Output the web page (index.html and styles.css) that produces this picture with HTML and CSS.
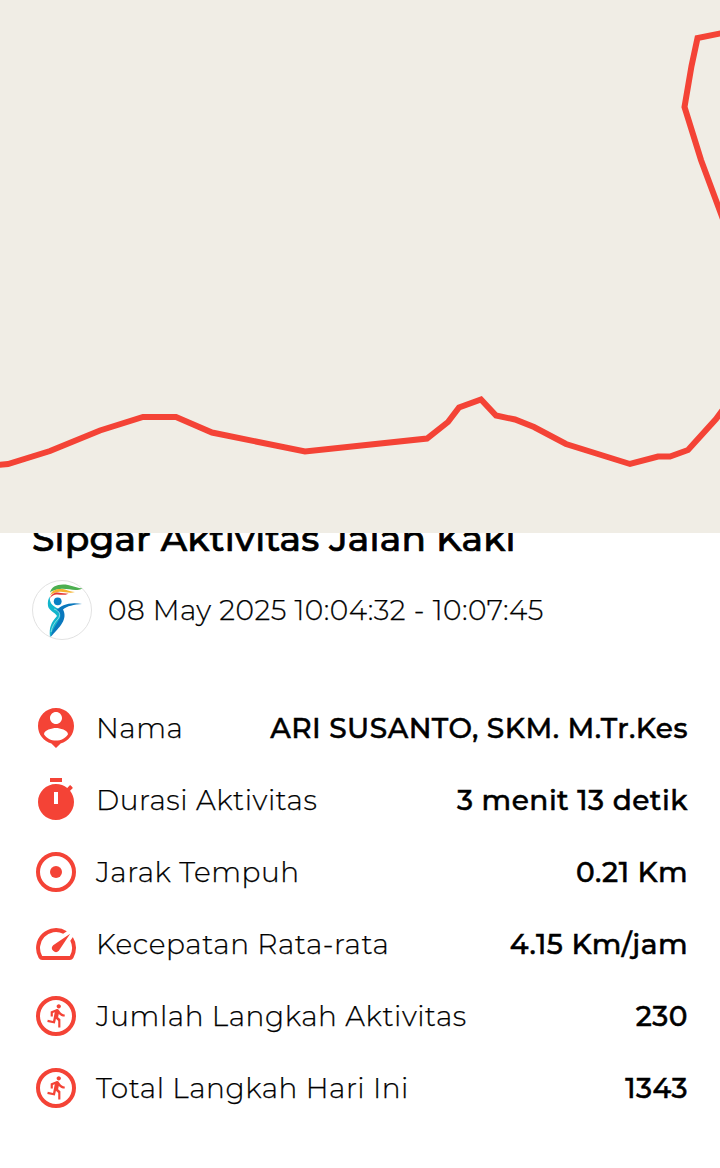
FILE: index.html
```
<!DOCTYPE html>
<html lang="id">
<head>
  <meta charset="UTF-8" />
  <meta name="viewport" content="width=device-width, initial-scale=1.0"/>
  <title>Sipgar Aktivitas Jalan Kaki</title>
  <link rel="stylesheet" href="styles.css">
</head>
<body>

  <!-- Route map -->
  <div class="map">
    <svg class="route" viewBox="0 0 720 533">
      <polyline points="-10,465.5 8,464 50,451 100,430.5 143,417 176,417 212,432.5 305,451.5 427,438.5 448,422 459,407.5 481,399.5 496,415.5 515,419.5 534,427 566,444 630,464 658,456.5 670,456.5 688,450 716,419 730,400"/>
      <polyline points="730,31.5 697.5,38 691.5,66 684.5,107 701,160 730,238"/>
    </svg>
  </div>

  <main class="detail">
    <h1 class="title"><span>Sipgar Aktivitas Jalan Kaki</span></h1>

    <div class="date-row">
      <svg class="avatar" viewBox="0 0 60 60">
        <circle cx="30" cy="30" r="29.5" fill="#fff" stroke="#e2e2e2"/>
        <path d="M18 13C19 6 27 3.500 36 5C41 6 46 8 50.500 8.500C43 12 36 8 28 9C22 10 19 11 18 13Z" fill="#4caf50"/>
        <path d="M18 16C20 9 27 8.500 33 9.500C37 11 40 12 43 12C37 14 32 11 26 12C21 13 19 14 18 16Z" fill="#f5b32e"/>
        <path d="M18 18.500C19 13 25 11.500 29 13L36.500 13.700C31 16 28 14 24 14.500C21 15 19 16.500 18 18.500Z" fill="#e53935"/>
        <circle cx="25.700" cy="21.300" r="3.900" fill="#0a80c4"/>
        <path d="M18 16.500C17 22 20 26 26 28.500C31 31 31 38 26 43L18 57C17 47 19 43 25 36C23 32 17 31 16 26C15.500 22 16 19 18 16.500Z" fill="#12b5cb"/>
        <path d="M24.500 30C29 25 38 21.500 50 24C42 24.500 35 26 31 29.500C36 39 28 47 18.500 57C20 50 24 45 28 38C29 35 28 32 24.500 30Z" fill="#0a78bd"/>
        <path d="M22 29C28 31 29 35 26 39C22 43 20 47 19 52" fill="none" stroke="#d5eef5" stroke-width="0.600"/>
      </svg>
      <span class="date">08 May 2025 10:04:32 - 10:07:45</span>
    </div>

    <ul class="stats">
      <li>
        <svg class="icon" viewBox="0 0 24 24"><path d="M12 2c-4.970 0-9 4.030-9 9 0 4.170 2.840 7.670 6.690 8.690L12 22l2.310-2.310C18.160 18.670 21 15.170 21 11c0-4.970-4.030-9-9-9zm0 2c1.660 0 3 1.340 3 3s-1.340 3-3 3-3-1.340-3-3 1.340-3 3-3zm0 14.300c-2.500 0-4.710-1.280-6-3.220.03-1.990 4-3.080 6-3.080 1.990 0 5.970 1.090 6 3.080-1.290 1.940-3.500 3.220-6 3.220z"/></svg>
        <span class="label">Nama</span>
        <span class="value">ARI SUSANTO, SKM. M.Tr.Kes</span>
      </li>
      <li>
        <svg class="icon" viewBox="0 0 24 24"><path d="M15 1H9v2h6V1zm-4 13h2V8h-2v6zm8.030-6.610l1.420-1.420c-.43-.51-.9-.99-1.410-1.410l-1.420 1.420C16.070 4.740 14.120 4 12 4c-4.970 0-9 4.030-9 9s4.020 9 9 9 9-4.030 9-9c0-2.120-.74-4.070-1.970-5.610z" fill-rule="evenodd"/></svg>
        <span class="label">Durasi Aktivitas</span>
        <span class="value">3 menit 13 detik</span>
      </li>
      <li>
        <svg class="icon" viewBox="0 0 24 24"><circle class="ring" cx="12" cy="12" r="9"/><circle cx="12" cy="12" r="3"/></svg>
        <span class="label">Jarak Tempuh</span>
        <span class="value">0.21 Km</span>
      </li>
      <li>
        <svg class="icon" viewBox="0 0 24 24"><path d="M20.380 8.570l-1.230 1.850a8 8 0 0 1-.22 7.580H5.070A8 8 0 0 1 15.580 6.850l1.850-1.230A10 10 0 0 0 3.350 19a2 2 0 0 0 1.720 1h13.850a2 2 0 0 0 1.740-1 10 10 0 0 0-.27-10.440zM10.590 15.410a2 2 0 0 0 2.830 0l5.660-8.490-8.490 5.660a2 2 0 0 0 0 2.830z"/></svg>
        <span class="label">Kecepatan Rata-rata</span>
        <span class="value">4.15 Km/jam</span>
      </li>
      <li>
        <svg class="icon" viewBox="0 0 24 24"><circle class="ring" cx="12" cy="12" r="9"/><path transform="translate(6.1 5.3) scale(0.54)" d="M13.490 5.480c1.100 0 2-.9 2-2s-.9-2-2-2-2 .9-2 2 .9 2 2 2zm-3.600 13.900l1-4.400 2.100 2v6h2v-7.500l-2.100-2 .6-3c1.300 1.500 3.300 2.500 5.500 2.500v-2c-1.900 0-3.500-1-4.300-2.400l-1-1.600c-.4-.6-1-1-1.700-1-.3 0-.5.1-.8.1l-5.200 2.200v4.700h2v-3.400l1.800-.7-1.600 8.100-4.900-1-.4 2 7 1.400z"/></svg>
        <span class="label">Jumlah Langkah Aktivitas</span>
        <span class="value">230</span>
      </li>
      <li>
        <svg class="icon" viewBox="0 0 24 24"><circle class="ring" cx="12" cy="12" r="9"/><path transform="translate(6.1 5.3) scale(0.54)" d="M13.490 5.480c1.100 0 2-.9 2-2s-.9-2-2-2-2 .9-2 2 .9 2 2 2zm-3.600 13.900l1-4.400 2.100 2v6h2v-7.500l-2.100-2 .6-3c1.300 1.500 3.300 2.500 5.500 2.500v-2c-1.900 0-3.500-1-4.300-2.400l-1-1.600c-.4-.6-1-1-1.700-1-.3 0-.5.1-.8.1l-5.200 2.200v4.700h2v-3.400l1.800-.7-1.600 8.100-4.900-1-.4 2 7 1.400z"/></svg>
        <span class="label">Total Langkah Hari Ini</span>
        <span class="value">1343</span>
      </li>
    </ul>
  </main>

</body>
</html>
```
FILE: styles.css
```
* {
  box-sizing: border-box;
}

body {
  margin: 0;
  height: 1168px;
  overflow: hidden;
  background-color: #fff;
  color: #000;
  font-family: Montserrat, Inter, sans-serif;
  font-size: 28px;
  letter-spacing: 0.5px;
}

/* the map covers the top of the title */
.map {
  position: relative;
  z-index: 1;
  height: 533px;
  background-color: #f0ede5;
}

.route {
  display: block;
  width: 720px;
  height: 533px;
  fill: none;
  stroke: #f44336;
  stroke-width: 6;
}

.detail {
  padding: 0 32px;
}

.title {
  margin: -17px 0 0;
  font-size: 36px;
  font-weight: 500;
  letter-spacing: 0.15px;
  line-height: 44px;
  white-space: nowrap;
  -webkit-text-stroke: 0.7px #000;
}

.date-row {
  display: flex;
  align-items: center;
  gap: 16px;
  margin-top: 20px;
}

.avatar {
  width: 60px;
  height: 60px;
}

.date {
  font-weight: 300;
  -webkit-text-stroke: 0.25px #000;
}

.stats {
  margin: 52px 0 0;
  padding: 0;
  list-style: none;
}

.stats li {
  display: flex;
  align-items: center;
  height: 72px;
}

.icon {
  width: 48px;
  height: 48px;
  margin-right: 16px;
  fill: #f44336;
}

.ring {
  fill: none;
  stroke: #f44336;
  stroke-width: 2;
}

.label {
  font-weight: 300;
  letter-spacing: 0.55px;
  -webkit-text-stroke: 0.25px #000;
}

.value {
  margin-left: auto;
  font-weight: 500;
  -webkit-text-stroke: 0.5px #000;
}
```
